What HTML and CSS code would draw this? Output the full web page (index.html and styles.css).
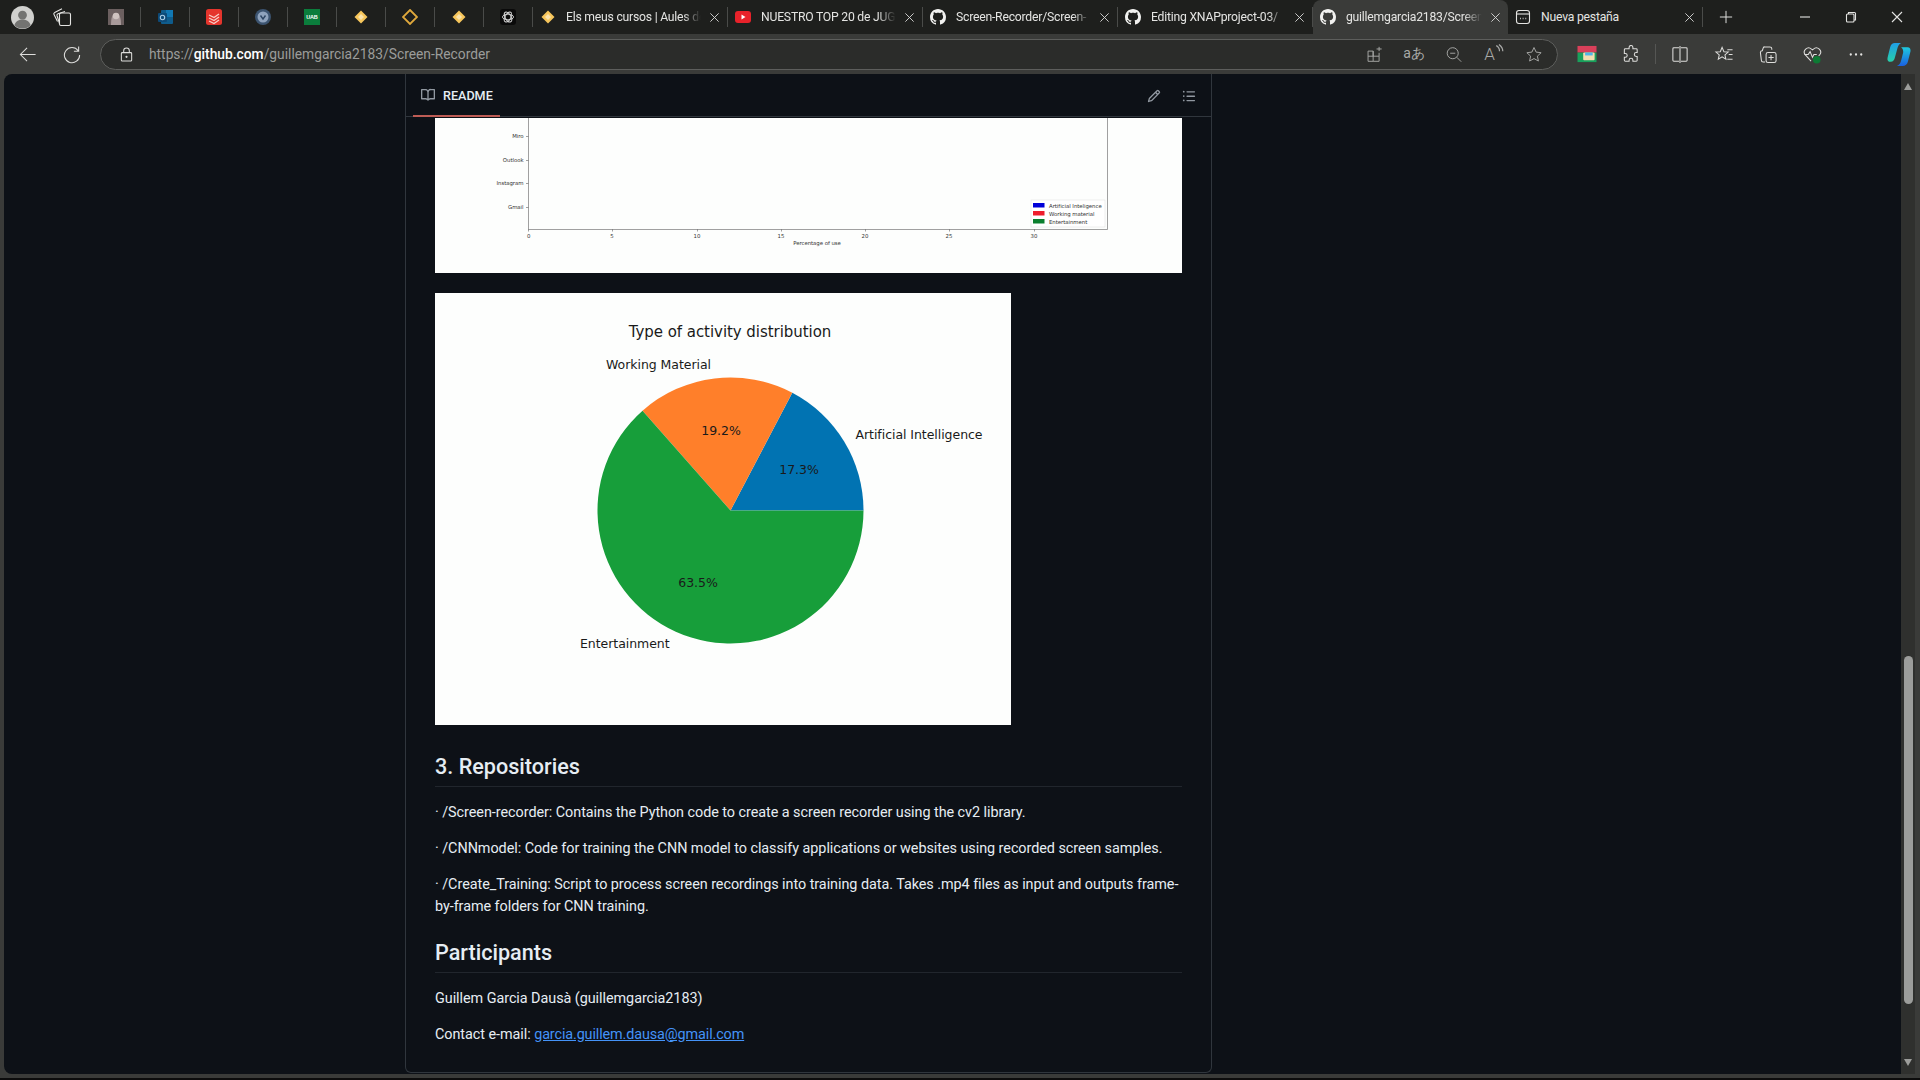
FILE: index.html
```html
<!DOCTYPE html>
<html lang="en">
<head>
    <meta charset="UTF-8">
    <meta name="viewport" content="width=device-width, initial-scale=1.0">
    <title>guillemgarcia2183/Screen-Recorder</title>
    <link rel="stylesheet" href="styles.css">
</head>
<body>
    <svg class="sprites" width="0" height="0">
        <symbol id="gh" viewBox="0 0 16 16"><path d="M8 0c4.42 0 8 3.58 8 8a8.013 8.013 0 0 1-5.45 7.59c-.4.08-.55-.17-.55-.38 0-.27.01-1.13.01-2.2 0-.75-.25-1.23-.54-1.48 1.78-.2 3.65-.88 3.65-3.95 0-.88-.31-1.59-.82-2.15.08-.2.36-1.02-.08-2.12 0 0-.67-.22-2.2.82-.64-.18-1.32-.27-2-.27-.68 0-1.36.09-2 .27-1.53-1.03-2.2-.82-2.2-.82-.44 1.1-.16 1.92-.08 2.12-.51.56-.82 1.28-.82 2.15 0 3.06 1.86 3.75 3.64 3.95-.23.2-.44.55-.51 1.07-.46.21-1.61.55-2.33-.66-.15-.24-.6-.83-1.23-.82-.67.01-.27.38.01.53.34.19.73.9.82 1.13.16.45.68 1.31 2.69.94 0 .67.01 1.3.01 1.49 0 .21-.15.45-.55.38A7.995 7.995 0 0 1 0 8c0-4.42 3.58-8 8-8Z"/></symbol>
        <symbol id="x" viewBox="0 0 12 12"><path d="M1.5 1.5l9 9M10.5 1.5l-9 9" fill="none" stroke="currentColor" stroke-width="1"/></symbol>
        <symbol id="diamond" viewBox="0 0 16 16"><path d="M8 1.5L14.5 8 8 14.5 1.5 8Z" fill="#f7c65c"/><path d="M8 5L11 8 8 11 5 8Z" fill="#fbe3ad"/></symbol>
    </svg>

    <div class="tabstrip">
        <div class="tabstrip-start">
            <svg class="avatar" viewBox="0 0 24 24"><circle cx="12" cy="12" r="12" fill="#d0d0ce"/><circle cx="12" cy="9.5" r="4.6" fill="#737371"/><path d="M3.5 20c1.5-4.5 5-6 8.5-6s7 1.500 8.500 6a12 12 0 0 1-17 0Z" fill="#737371"/></svg>
            <svg class="ico collections" viewBox="0 0 20 20"><rect x="7.500" y="6" width="11" height="12.500" rx="1.500"/><path d="M7.500 16.500L5 8.500a1.500 1.500 0 0 1 1-1.800L13 4.500"/><path d="M5.500 14.500L2 7.500a1.500 1.500 0 0 1 .7-2L10 1.800"/></svg>
        </div>
        <div class="pinned">
            <svg viewBox="0 0 16 16"><rect width="16" height="16" fill="#6b5f5f"/><path d="M3 16c0-6 1-12 5-12s5 6 5 12Z" fill="#a89a9a"/><circle cx="8" cy="7" r="3.200" fill="#cfc3c0"/></svg>
        </div>
        <div class="pinned">
            <svg viewBox="0 0 16 16"><rect x="4" y="1" width="12" height="14" rx="1" fill="#0f5c8c"/><rect x="9" y="1" width="7" height="7" fill="#1178b4"/><rect x="1" y="4" width="9" height="9" rx="1" fill="#0d4a78"/><circle cx="5.500" cy="8.500" r="2.200" fill="none" stroke="#a9cde6" stroke-width="1.100"/></svg>
        </div>
        <div class="pinned">
            <svg viewBox="0 0 16 16"><rect width="16" height="16" rx="2.500" fill="#e5352d"/><path d="M3 6l5 2.500L13 5M3 9l5 2.500L13 8M3 12l5 2.500L13 11" fill="none" stroke="#f8cfc9" stroke-width="1.300"/></svg>
        </div>
        <div class="pinned">
            <svg viewBox="0 0 16 16"><circle cx="8" cy="8" r="8" fill="#3c5470"/><circle cx="8" cy="8" r="5.500" fill="#8fa3bd"/><path d="M5.500 6.500L8 10l2.500-3.500" fill="none" stroke="#2d4563" stroke-width="1.400"/></svg>
        </div>
        <div class="pinned">
            <svg viewBox="0 0 16 16"><rect width="16" height="16" fill="#0b7d3c"/><text class="uab" x="8" y="10">UAB</text></svg>
        </div>
        <div class="pinned"><svg viewBox="0 0 16 16"><use href="#diamond"/></svg></div>
        <div class="pinned">
            <svg viewBox="0 0 16 16"><path d="M8 1L15 8 8 15 1 8Z" fill="none" stroke="#e0a93c" stroke-width="1.800"/></svg>
        </div>
        <div class="pinned"><svg viewBox="0 0 16 16"><use href="#diamond"/></svg></div>
        <div class="pinned">
            <svg viewBox="0 0 16 16"><rect width="16" height="16" rx="3" fill="#0a0a0a"/><g fill="none" stroke="#d8d8d8" stroke-width=".9"><ellipse cx="8" cy="8" rx="5.500" ry="2.800"/><ellipse cx="8" cy="8" rx="5.500" ry="2.800" transform="rotate(60 8 8)"/><ellipse cx="8" cy="8" rx="5.500" ry="2.800" transform="rotate(120 8 8)"/></g></svg>
        </div>
        <div class="tab">
            <svg class="tab-icon" viewBox="0 0 16 16"><use href="#diamond"/></svg>
            <span class="tab-title fade">Els meus cursos | Aules de</span>
            <svg class="tab-close"><use href="#x"/></svg>
        </div>
        <div class="tab">
            <svg class="tab-icon" viewBox="0 0 16 16"><rect y="2" width="16" height="12" rx="3" fill="#e8222a"/><path d="M6.500 5.500L10.500 8l-4 2.500Z" fill="#fff"/></svg>
            <span class="tab-title fade">NUESTRO TOP 20 de JUG</span>
            <svg class="tab-close"><use href="#x"/></svg>
        </div>
        <div class="tab">
            <svg class="tab-icon gh"><use href="#gh"/></svg>
            <span class="tab-title fade">Screen-Recorder/Screen-</span>
            <svg class="tab-close"><use href="#x"/></svg>
        </div>
        <div class="tab">
            <svg class="tab-icon gh"><use href="#gh"/></svg>
            <span class="tab-title fade">Editing XNAPproject-03/</span>
            <svg class="tab-close"><use href="#x"/></svg>
        </div>
        <div class="tab active">
            <svg class="tab-icon gh"><use href="#gh"/></svg>
            <span class="tab-title fade">guillemgarcia2183/Screen</span>
            <svg class="tab-close"><use href="#x"/></svg>
        </div>
        <div class="tab last">
            <svg class="tab-icon ico" viewBox="0 0 16 16"><rect x="1.500" y="1.500" width="13" height="13" rx="2.500"/><path d="M1.500 5h13"/><path d="M5 9.500h.8M7.700 9.500h.8M10.400 9.500h.8" stroke-width="1.400"/></svg>
            <span class="tab-title">Nueva pestaña</span>
            <svg class="tab-close"><use href="#x"/></svg>
        </div>
        <svg class="ico new-tab" viewBox="0 0 16 16"><path d="M8 1v14M1 8h14"/></svg>
        <div class="window-controls">
            <svg class="ico" viewBox="0 0 12 12"><path d="M1 6h10"/></svg>
            <svg class="ico" viewBox="0 0 12 12"><rect x="1.500" y="3" width="7.500" height="8" rx="1"/><path d="M3.500 3V1.500h6a1 1 0 0 1 1 1V9H9"/></svg>
            <svg class="ico" viewBox="0 0 12 12"><path d="M1 1l10 10M11 1L1 11"/></svg>
        </div>
    </div>

    <div class="toolbar">
        <svg class="ico tool" viewBox="0 0 20 20"><path d="M18 10H2M9 3l-7 7 7 7"/></svg>
        <svg class="ico tool" viewBox="0 0 20 20"><path d="M16.500 6A8 8 0 1 0 18 10.500M17 1.500V6.500H12"/></svg>
        <div class="address">
            <svg class="ico lock" viewBox="0 0 16 16"><rect x="2.500" y="6" width="11" height="9" rx="1"/><path d="M5 6V4a3 3 0 0 1 6 0v2"/><circle cx="8" cy="10.500" r=".6"/></svg>
            <div class="url">https://<b>github.com</b>/guillemgarcia2183/Screen-Recorder</div>
            <div class="address-icons">
                <svg class="ico" viewBox="0 0 20 20"><path d="M3 6h6v12H3zM3 12h13v6H9M9 6v6M16 12V8M13 3.500h6M16 1v5"/></svg>
                <span class="translate">aあ</span>
                <svg class="ico" viewBox="0 0 20 20"><circle cx="8.500" cy="8.500" r="6.500"/><path d="M5.500 8.500h6M13.300 13.300L18.500 18.500"/></svg>
                <span class="read-aloud">A<svg class="ico" viewBox="0 0 8 10"><path d="M1 1.500c2 1 3 3 3 5M3.500 .5c2 1.500 3.500 4 3.500 6"/></svg></span>
                <svg class="ico" viewBox="0 0 20 20"><path d="M10 1.800l2.500 5.400 5.900.7-4.400 4 1.200 5.800L10 14.800l-5.200 2.900L6 11.900l-4.400-4 5.900-.7Z"/></svg>
            </div>
        </div>
        <div class="actions">
            <svg class="tool" viewBox="0 0 20 20"><rect y="1" width="20" height="7" fill="#d9405a"/><rect y="8" width="20" height="10" fill="#19a05c"/><rect x="6" y="8" width="12" height="8" rx="1" fill="#f3deb0"/><rect x="8" y="8" width="8" height="3" fill="#4fb6e8"/></svg>
            <svg class="ico tool" viewBox="0 0 20 20"><path d="M8 2.500a2 2 0 0 1 4 0V4h3.500a1 1 0 0 1 1 1v3h-1a2 2 0 0 0 0 4h1v4a1 1 0 0 1-1 1H12v-1a2 2 0 0 0-4 0v1H4a1 1 0 0 1-1-1v-3h1a2 2 0 0 0 0-4H3V5a1 1 0 0 1 1-1h4Z"/></svg>
            <i class="actions-sep"></i>
            <svg class="ico tool" viewBox="0 0 20 20"><path d="M9 3H3.500a1 1 0 0 0-1 1v12a1 1 0 0 0 1 1H9M11 3h5.500a1 1 0 0 1 1 1v12a1 1 0 0 1-1 1H11M10 1v18"/></svg>
            <svg class="ico tool" viewBox="0 0 20 20"><path d="M8 2.500l1.900 4.500 4.600.4-3.500 3 1 4.600L8 12.500l-4 2.500 1-4.600-3.500-3 4.600-.4ZM13.500 5H19M15 10h4M13.500 15H19"/></svg>
            <svg class="ico tool" viewBox="0 0 20 20"><path d="M7 18H5a2 2 0 0 1-2-2l-1-8a2 2 0 0 1 2-2l1-3a1.500 1.500 0 0 1 1.500-1H12a2 2 0 0 1 2 2v1"/><rect x="8" y="8" width="10.500" height="10.500" rx="2"/><path d="M13.200 10.500v5.500M10.500 13.200H16"/></svg>
            <svg class="tool" viewBox="0 0 20 20"><g class="ico"><path d="M9 17L3 10.500a4.500 4.500 0 0 1 6.500-6.200L10.500 5l1-.7A4.500 4.500 0 0 1 18 10.500l-1 1"/><path d="M2 10h4l2-3 2.500 6 1.500-3h3"/></g><circle cx="15" cy="15.500" r="4" fill="#0d7a34"/></svg>
            <svg class="tool more" viewBox="0 0 20 20"><circle cx="4.500" cy="10" r="1.200"/><circle cx="10" cy="10" r="1.200"/><circle cx="15.500" cy="10" r="1.200"/></svg>
            <svg class="tool copilot" viewBox="0 0 24 24">
                <defs>
                    <linearGradient id="cp1" x1="0" y1="0" x2="0" y2="1"><stop offset="0" stop-color="#1f9fe8"/><stop offset="1" stop-color="#28d0a8"/></linearGradient>
                    <linearGradient id="cp2" x1="0" y1="0" x2="0" y2="1"><stop offset="0" stop-color="#1ecbe0"/><stop offset="1" stop-color="#1a5fe0"/></linearGradient>
                </defs>
                <path d="M8 1h6c-2 1-3 3-3.500 5L8 15c-.5 2-1.500 4-4 4-2.500 0-3.500-1.500-3-4L3.500 5C4 2.500 6 1 8 1Z" fill="url(#cp1)"/>
                <path d="M14 5h6c2.500 0 3.500 2 3 4l-2.500 10c-.5 2.500-2.500 4-5 4H10c2.500-1 3.500-3 4-5l2-8c.3-2-.5-4-2-5Z" fill="url(#cp2)"/>
            </svg>
        </div>
    </div>

    <div class="main">
        <div class="viewport">
            <div class="readme">
                <div class="readme-head">
                    <div class="readme-tab">
                        <svg viewBox="0 0 16 16"><path d="M0 1.750A.75.75 0 0 1 .75 1h4.253c1.227 0 2.317.59 3 1.501A3.743 3.743 0 0 1 11.006 1h4.245a.75.75 0 0 1 .75.75v10.500a.75.75 0 0 1-.75.75h-4.507a2.250 2.250 0 0 0-1.591.659l-.622.621a.75.75 0 0 1-1.060 0l-.622-.621A2.250 2.250 0 0 0 5.258 13H.75a.75.75 0 0 1-.75-.75Zm7.251 10.324.004-5.073-.002-2.253A2.250 2.250 0 0 0 5.003 2.500H1.500v9h3.757a3.750 3.750 0 0 1 1.994.574ZM8.755 4.750l-.004 7.322a3.752 3.752 0 0 1 1.992-.572H14.500v-9h-3.495a2.250 2.250 0 0 0-2.250 2.250Z"/></svg>
                        README
                    </div>
                    <div class="readme-tools">
                        <svg viewBox="0 0 16 16"><path d="M11.013 1.427a1.750 1.750 0 0 1 2.474 0l1.086 1.086a1.750 1.750 0 0 1 0 2.474l-8.610 8.610c-.21.21-.47.364-.756.445l-3.251.93a.75.75 0 0 1-.927-.928l.929-3.250c.081-.286.235-.547.445-.758l8.610-8.610Zm.176 4.823L9.750 4.810l-6.286 6.287a.253.253 0 0 0-.064.108l-.558 1.953 1.953-.558a.253.253 0 0 0 .108-.064Zm1.238-3.763a.25.25 0 0 0-.354 0L10.811 3.750l1.439 1.440 1.263-1.263a.25.25 0 0 0 0-.354Z"/></svg>
                        <svg viewBox="0 0 16 16"><path d="M5.750 2.500h8.500a.75.75 0 0 1 0 1.500h-8.500a.75.75 0 0 1 0-1.500Zm0 5h8.500a.75.75 0 0 1 0 1.500h-8.500a.75.75 0 0 1 0-1.500Zm0 5h8.500a.75.75 0 0 1 0 1.500h-8.500a.75.75 0 0 1 0-1.500ZM2 14a1 1 0 1 1 0-2 1 1 0 0 1 0 2Zm1-6a1 1 0 1 1-2 0 1 1 0 0 1 2 0ZM2 4a1 1 0 1 1 0-2 1 1 0 0 1 0 2Z"/></svg>
                    </div>
                </div>
                <div class="markdown">
                    <svg class="chart chart-bars" viewBox="0 0 747 155">
                        <path class="axis" d="M93.500 0V111.500H672.500V0"/>
                        <path class="axis" d="M91 18.500h2.500M91 42.500h2.500M91 65.500h2.500M91 89.500h2.500M93.500 111v2.500M177.500 111v2.500M262.500 111v2.500M346.500 111v2.500M430.500 111v2.500M514.500 111v2.500M599.500 111v2.500"/>
                        <text class="tick end" x="88.500" y="20">Miro</text>
                        <text class="tick end" x="88.500" y="44">Outlook</text>
                        <text class="tick end" x="88.500" y="67">Instagram</text>
                        <text class="tick end" x="88.500" y="91">Gmail</text>
                        <text class="tick mid" x="93.600" y="120">0</text>
                        <text class="tick mid" x="177" y="120">5</text>
                        <text class="tick mid" x="262" y="120">10</text>
                        <text class="tick mid" x="346" y="120">15</text>
                        <text class="tick mid" x="430" y="120">20</text>
                        <text class="tick mid" x="514" y="120">25</text>
                        <text class="tick mid" x="599" y="120">30</text>
                        <text class="tick mid" x="382" y="127">Percentage of use</text>
                        <rect class="legend" x="596" y="82" width="74" height="27"/>
                        <rect x="598" y="85" width="11.500" height="4.500" fill="#0000d8"/>
                        <rect x="598" y="93" width="11.500" height="4.500" fill="#ee1c2c"/>
                        <rect x="598" y="101" width="11.500" height="4.500" fill="#0a7f2e"/>
                        <text class="tick" x="614" y="89.500">Artificial Inteligence</text>
                        <text class="tick" x="614" y="97.500">Working material</text>
                        <text class="tick" x="614" y="105.500">Entertainment</text>
                    </svg>
                    <svg class="chart chart-pie" viewBox="0 0 576 432">
                        <path d="M295.500 217.500H428.500A133 133 0 0 0 357.300 99.700Z" fill="#0173b2"/>
                        <path d="M295.500 217.500L357.300 99.700A133 133 0 0 0 207.500 117.700Z" fill="#ff7f2a"/>
                        <path d="M295.500 217.500L207.500 117.700A133 133 0 1 0 428.500 217.500Z" fill="#179e3a"/>
                        <text class="pie-title" x="295" y="44">Type of activity distribution</text>
                        <text class="pie-label" x="171" y="76">Working Material</text>
                        <text class="pie-label" x="420.500" y="145.500">Artificial Intelligence</text>
                        <text class="pie-label" x="145" y="355">Entertainment</text>
                        <text class="pie-pct" x="286" y="142">19.2%</text>
                        <text class="pie-pct" x="364" y="181">17.3%</text>
                        <text class="pie-pct" x="263" y="294">63.5%</text>
                    </svg>
                    <h2>3. Repositories</h2>
                    <p>· /Screen-recorder: Contains the Python code to create a screen recorder using the cv2 library.</p>
                    <p>· /CNNmodel: Code for training the CNN model to classify applications or websites using recorded screen samples.</p>
                    <p>· /Create_Training: Script to process screen recordings into training data. Takes .mp4 files as input and outputs frame-by-frame folders for CNN training.</p>
                    <h2>Participants</h2>
                    <p>Guillem Garcia Dausà (guillemgarcia2183)</p>
                    <p>Contact e-mail: <a href="#">garcia.guillem.dausa@gmail.com</a></p>
                </div>
            </div>
        </div>
        <div class="scrollbar">
            <i class="arrow-up"></i>
            <div class="scroll-track"><div class="scroll-thumb"></div></div>
            <i class="arrow-down"></i>
        </div>
    </div>
    <div class="taskbar-edge"></div>
</body>
</html>
```

FILE: styles.css
```css
* {
    margin: 0;
    padding: 0;
    box-sizing: border-box;
}

html, body {
    height: 100%;
    overflow: hidden;
}

body {
    display: flex;
    flex-direction: column;
    font-family: Roboto, "Liberation Sans", sans-serif;
    background-color: #3a3b39;
    color: #e6edf3;
}

.sprites {
    display: none;
}

.ico {
    fill: none;
    stroke: currentColor;
    stroke-width: 1.1;
}

/* tab strip */
.tabstrip {
    display: flex;
    align-items: center;
    height: 34px;
    flex-shrink: 0;
    background-color: #1e1f1d;
    color: #e4e4e2;
    font-size: 12.2px;
    letter-spacing: -0.22px;
}

.tabstrip-start {
    display: flex;
    align-items: center;
    width: 92px;
    padding-left: 11px;
}

.avatar {
    width: 23px;
    height: 23px;
}

.collections {
    width: 20px;
    height: 20px;
    margin-left: 18px;
}

.pinned {
    display: flex;
    align-items: center;
    justify-content: center;
    width: 49px;
    height: 20px;
    border-right: 1px solid #4a4b49;
}

.pinned svg {
    width: 16px;
    height: 16px;
}

.uab {
    font-family: "Liberation Sans", sans-serif;
    font-size: 5.5px;
    font-weight: bold;
    fill: #fff;
    text-anchor: middle;
}

.tab {
    display: flex;
    align-items: center;
    width: 195px;
    height: 20px;
    padding: 0 7px;
    border-right: 1px solid #4a4b49;
}

.tab.active {
    height: 34px;
    background-color: #3a3b39;
    border-right: none;
    border-radius: 8px 8px 0 0;
}

.tab-icon {
    width: 16px;
    height: 16px;
    flex-shrink: 0;
}

.tab-icon.gh {
    fill: #f2f2f0;
}

.tab-title {
    flex: 1;
    margin: 0 4px 0 10px;
    overflow: hidden;
    white-space: nowrap;
}

.tab-title.fade {
    -webkit-mask-image: linear-gradient(to right, #000 84%, transparent 97%);
    mask-image: linear-gradient(to right, #000 84%, transparent 97%);
}

.tab-close {
    width: 11px;
    height: 11px;
    flex-shrink: 0;
    color: #d8d8d6;
}

.new-tab {
    width: 14px;
    height: 14px;
    margin-left: 16px;
}

.window-controls {
    display: flex;
    align-items: center;
    gap: 34px;
    margin-left: auto;
    padding-right: 17px;
}

.window-controls svg {
    width: 12px;
    height: 12px;
}

/* toolbar */
.toolbar {
    display: flex;
    align-items: center;
    height: 40px;
    flex-shrink: 0;
    padding-left: 6px;
    color: #dededc;
}

.tool {
    width: 44px;
    height: 19px;
    flex-shrink: 0;
}

.address {
    display: flex;
    align-items: center;
    width: 1458px;
    height: 31px;
    margin-left: 6px;
    padding-left: 18px;
    background-color: #2b2c2a;
    border: 1px solid #5d5e5c;
    border-radius: 16px;
}

.lock {
    width: 15px;
    height: 15px;
    flex-shrink: 0;
}

.url {
    margin-left: 15px;
    font-size: 13.8px;
    color: #9b9c9a;
}

.url b {
    font-weight: 500;
    color: #fff;
}

.address-icons {
    display: flex;
    align-items: center;
    margin-left: auto;
    padding-right: 3px;
    color: #a9aaa8;
}

.address-icons > * {
    display: flex;
    justify-content: center;
    width: 40px;
}

.address-icons > svg {
    height: 17px;
}

.translate {
    font-size: 14px;
}

.read-aloud {
    font-size: 17px;
    font-weight: 300;
}

.read-aloud svg {
    width: 9px;
    height: 11px;
}

.actions {
    display: flex;
    align-items: center;
    margin-left: 7px;
}

.actions-sep {
    width: 1px;
    height: 20px;
    margin: 0 2px;
    background-color: #555654;
}

.more {
    fill: #e6e6e4;
}

.copilot {
    width: 42px;
    height: 25px;
}

/* page area */
.main {
    display: flex;
    height: 1000px;
    flex-shrink: 0;
    padding-right: 5px;
}

.viewport {
    flex: 1;
    margin-left: 4px;
    padding-left: 401px;
    overflow: hidden;
    background-color: #0d1117;
    border-radius: 8px 0 0 8px;
}

.readme {
    width: 807px;
    height: 999px;
    border: 1px solid #30363d;
    border-top: none;
    border-radius: 0 0 6px 6px;
}

.readme-head {
    display: flex;
    align-items: center;
    justify-content: space-between;
    height: 43px;
    padding: 0 15px 0 7px;
    border-bottom: 1px solid #30363d;
}

.readme-tab {
    display: flex;
    align-items: center;
    gap: 8px;
    height: 43px;
    padding: 2px 7px 0 8px;
    width: 87px;
    border-bottom: 2px solid #bd5c55;
    font-size: 12.6px;
    font-weight: 500;
    white-space: nowrap;
}

.readme-tab svg {
    width: 14px;
    height: 14px;
    flex-shrink: 0;
    fill: #9198a1;
}

.readme-tools {
    display: flex;
    gap: 21px;
    padding-top: 2px;
}

.readme-tools svg {
    width: 14px;
    height: 14px;
    fill: #9198a1;
}

.markdown {
    padding: 1px 29px 0 29px;
    font-size: 14.4px;
    line-height: 22px;
    letter-spacing: -0.05px;
}

.chart {
    display: block;
    background-color: #fdfefd;
}

.chart-bars {
    width: 747px;
    height: 155px;
}

.chart-pie {
    width: 576px;
    height: 432px;
    margin-top: 20px;
}

.axis {
    fill: none;
    stroke: #777;
    stroke-width: .7;
}

.legend {
    fill: #fff;
    stroke: #ddd;
    stroke-width: .5;
}

.tick {
    font-family: "DejaVu Sans", sans-serif;
    font-size: 5.4px;
    fill: #333;
}

.tick.end {
    text-anchor: end;
}

.tick.mid {
    text-anchor: middle;
}

.pie-title {
    font-family: "DejaVu Sans", sans-serif;
    font-size: 15px;
    fill: #1a1a1a;
    text-anchor: middle;
}

.pie-label {
    font-family: "DejaVu Sans", sans-serif;
    font-size: 12.5px;
    fill: #1a1a1a;
}

.pie-pct {
    font-family: "DejaVu Sans", sans-serif;
    font-size: 12.5px;
    fill: #1a1a1a;
    text-anchor: middle;
}

.markdown h2 {
    margin: 20.6px 0 15px;
    padding-bottom: 6px;
    font-size: 21.6px;
    line-height: 27px;
    font-weight: 500;
    letter-spacing: 0;
    border-bottom: 1px solid #21262d;
}

.chart-pie + h2 {
    margin-top: 28px;
}

.markdown p {
    margin-bottom: 14px;
}

.markdown a {
    color: #4493f8;
    letter-spacing: -0.12px;
}

/* scrollbar */
.scrollbar {
    display: flex;
    flex-direction: column;
    align-items: center;
    width: 14px;
    height: 1000px;
    padding: 9px 0 8px;
    background-color: #2f302e;
}

.arrow-up,
.arrow-down {
    width: 0;
    height: 0;
    flex-shrink: 0;
    border-left: 4.5px solid transparent;
    border-right: 4.5px solid transparent;
}

.arrow-up {
    border-bottom: 7px solid #9c9d9b;
}

.arrow-down {
    border-top: 7px solid #9c9d9b;
}

.scroll-track {
    flex: 1;
    width: 9px;
}

.scroll-thumb {
    width: 9px;
    height: 348px;
    margin-top: 566px;
    background-color: #9c9d9b;
    border-radius: 5px;
}

.taskbar-edge {
    flex: 1;
    margin-top: 4px;
    background-color: #0c0c0c;
}
```
